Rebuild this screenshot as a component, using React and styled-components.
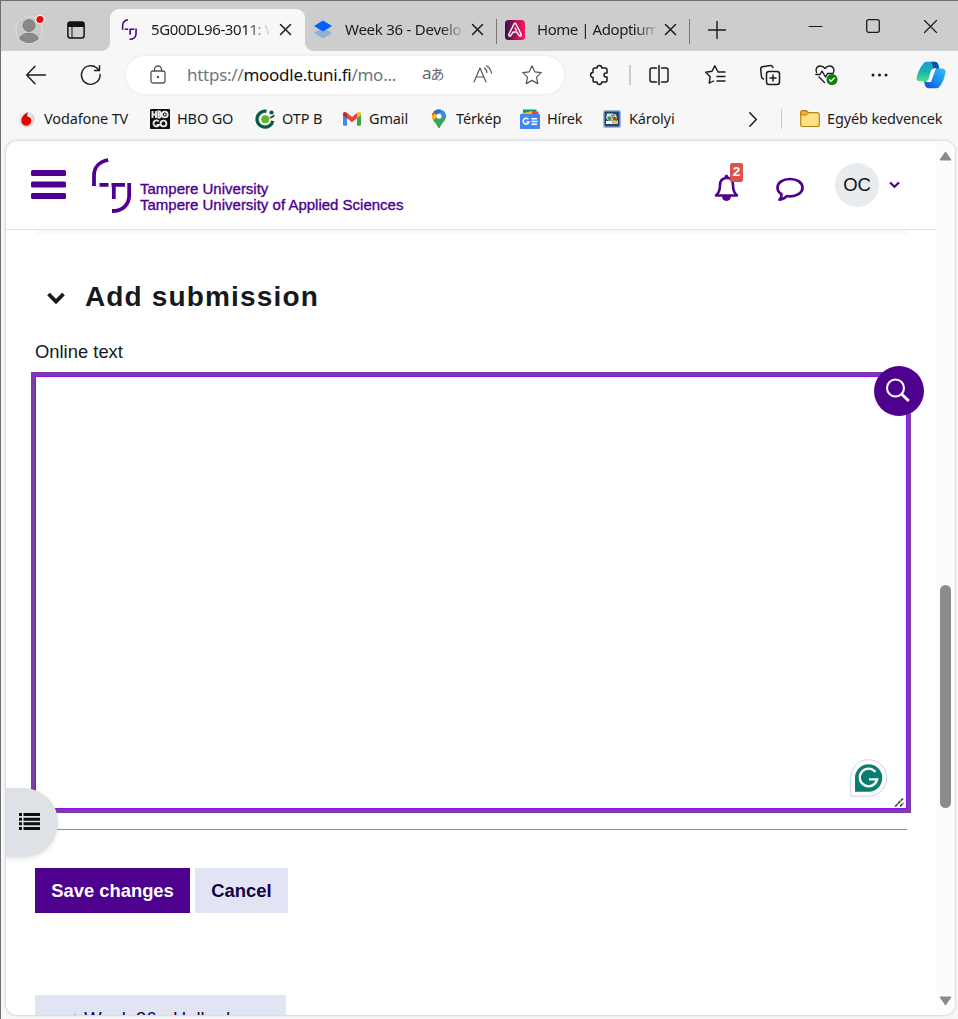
import React from 'react';
import styled, { createGlobalStyle, css } from 'styled-components';

const UI = '"Noto Sans", "Open Sans", "Noto Sans CJK JP", sans-serif';
const PAGE = '"Liberation Sans", Arial, sans-serif';
const PURPLE = '#4e008e';

const Global = createGlobalStyle`
  * { box-sizing: border-box; }
  body { margin: 0; background: #f7f7f7; overflow: hidden; }
  svg { display: block; flex: none; overflow: visible; }
`;

const Window = styled.div`
  width: 958px;
  height: 1019px;
  overflow: hidden;
  display: flex;
  flex-direction: column;
  background: #f7f7f7;
  border-left: 1px solid #706e6e;
  border-top: 1px solid #706e6e;
  font-family: ${UI};
  color: #1b1b1b;
`;

const TabStrip = styled.div`
  height: 50px;
  flex: none;
  display: flex;
  background: #cdcdcd;
`;

const Slot = styled.div`
  width: ${(p) => p.$w}px;
  height: ${(p) => (p.$h ? p.$h + 'px' : '100%')};
  flex: none;
  display: flex;
  align-items: center;
  justify-content: center;
`;

const Tab = styled.div`
  position: relative;
  width: ${(p) => p.$w}px;
  height: 42px;
  margin-top: 8px;
  flex: none;
  display: flex;
  align-items: center;
  padding: 0 0 1px 8px;
  font-size: 15px;
  ${(p) =>
    p.$active &&
    css`
      padding-left: 9px;
      background: #f7f7f7;
      border-radius: 9px 9px 0 0;
      &::before,
      &::after {
        content: '';
        position: absolute;
        bottom: 0;
        width: 8px;
        height: 8px;
      }
      &::before {
        left: -8px;
        background: radial-gradient(circle at 0 0, transparent 7.5px, #f7f7f7 8px);
      }
      &::after {
        right: -8px;
        background: radial-gradient(circle at 100% 0, transparent 7.5px, #f7f7f7 8px);
      }
    `}
`;

const TabTitle = styled.span`
  width: 119px;
  margin-left: ${(p) => p.$ml || 13}px;
  padding-bottom: 2px;
  white-space: nowrap;
  letter-spacing: ${(p) => p.$ls || 0}px;
  mask-image: linear-gradient(to right, #000 ${(p) => p.$fade}px, transparent ${(p) => p.$fade + 24}px);
`;

const TabClose = styled.div`
  width: 14px;
  margin-left: ${(p) => p.$ml || 6}px;
  display: flex;
  justify-content: center;
`;

const Divider = styled.div`
  width: ${(p) => p.$w || 1}px;
  height: ${(p) => p.$h}px;
  margin-top: ${(p) => p.$mt || 0}px;
  flex: none;
  align-self: center;
  background: ${(p) => p.$c};
`;

const Toolbar = styled.div`
  height: 47px;
  flex: none;
  display: flex;
  align-items: center;
`;

const Address = styled.div`
  width: 438px;
  height: 38px;
  flex: none;
  display: flex;
  align-items: center;
  background: #fff;
  border-radius: 19px;
  box-shadow: 0 0 4px rgba(0, 0, 0, 0.07);
`;

const Url = styled.span`
  width: 226px;
  margin-left: 13px;
  font-size: 17px;
  letter-spacing: -0.27px;
  color: #70757a;
  white-space: nowrap;
  b { font-weight: 400; color: #111; }
`;

const Translate = styled.span`
  width: 32px;
  padding-bottom: 3px;
  font-size: 17px;
  line-height: 20px;
  letter-spacing: -1px;
  color: #666;
  white-space: nowrap;
  small { font-size: 14px; }
`;

const Bookmarks = styled.div`
  height: 43px;
  flex: none;
  display: flex;
  align-items: center;
  padding: 0 0 1px 16px;
`;

const Bookmark = styled.div`
  width: ${(p) => p.$w}px;
  flex: none;
  display: flex;
  align-items: center;
  gap: 7px;
  font-size: 14.5px;
  line-height: 20px;
  letter-spacing: -0.14px;
  white-space: nowrap;
`;

const BookmarkName = styled.span`
  padding-bottom: 2px;
`;

const Viewport = styled.div`
  width: 949px;
  height: 874px;
  margin-left: 5px;
  flex: none;
  display: flex;
  overflow: hidden;
  background: #fff;
  border-radius: 11px;
  box-shadow: 0 0 3px rgba(0, 0, 0, 0.28);
  font-family: ${PAGE};
`;

const Main = styled.main`
  position: relative;
  width: 930px;
  height: 874px;
  flex: none;
  overflow: hidden;
`;

const Scrollbar = styled.div`
  width: 19px;
  padding: 10px 0 9px;
  display: flex;
  flex-direction: column;
  align-items: center;
  justify-content: space-between;
  background: #fcfcfc;
`;

const Thumb = styled.div`
  width: 11px;
  height: 223px;
  margin: 424px 0 auto;
  border-radius: 6px;
  background: #8b8b8b;
`;

const SiteHeader = styled.header`
  height: 89px;
  display: flex;
  border-bottom: 1px solid #dee2e6;
`;

const Brand = styled.div`
  width: 615px;
  display: flex;
  padding: 17px 0 0 25px;
`;

const Menu = styled.div`
  width: 35px;
  margin-top: 12px;
`;

const BrandName = styled.div`
  margin: 23px 0 0 8px;
  font-size: 15px;
  line-height: 16px;
  letter-spacing: 0;
  color: ${PURPLE};
  -webkit-text-stroke: 0.35px ${PURPLE};
  white-space: nowrap;
`;

const Bell = styled.div`
  position: relative;
  width: 27px;
  height: 30px;
  margin: 31px 0 0 92px;
`;

const Badge = styled.span`
  position: absolute;
  left: 17px;
  top: -9px;
  width: 13px;
  height: 19px;
  border-radius: 2px;
  background: #d9534f;
  color: #fff;
  font: 700 13.5px/18px ${PAGE};
  text-align: center;
`;

const Avatar = styled.div`
  width: 44px;
  height: 44px;
  margin: 22px 10px 0 31px;
  border-radius: 50%;
  background: #e9ecef;
  display: flex;
  align-items: center;
  justify-content: center;
  font-size: 18.5px;
  color: #111;
`;

const Form = styled.section`
  padding: 0 29px;
`;

const Strip = styled.div`
  height: 4px;
  margin-right: -1px;
  background: #f8f9fb;
`;

const Heading = styled.h3`
  height: 40px;
  margin: 43px 0 0 12px;
  display: flex;
  align-items: center;
  gap: 20px;
  font-size: 28px;
  letter-spacing: 1.15px;
  color: #16191c;
  svg { margin-top: 2px; }
`;

const Label = styled.label`
  display: block;
  height: 24px;
  margin-top: 23px;
  font-size: 18.4px;
  line-height: 24px;
  color: #16191c;
`;

const Editor = styled.div`
  width: 880px;
  height: 441px;
  margin: 8px 0 0 -4px;
  border: 4px solid #7b3dac;
  box-shadow: inset 0 0 0 1px #960cf0;
  background: #fff;
  display: flex;
  align-items: flex-end;
  justify-content: flex-end;
`;

const Resizer = styled.div`
  margin: 0 3px 2px 8px;
`;

const GrammarBadge = styled.div`
  margin-bottom: 12px;
`;

const Rule = styled.div`
  height: 1px;
  margin-top: 16px;
  background: #8e8e93;
`;

const Actions = styled.div`
  display: flex;
  gap: 5px;
  margin-top: 38px;
`;

const Button = styled.button`
  width: ${(p) => p.$w}px;
  height: 45px;
  padding: 0;
  border: 0;
  background: ${(p) => (p.$primary ? PURPLE : '#e1e4f3')};
  color: ${(p) => (p.$primary ? '#fff' : '#150046')};
  font: 700 18.4px/44px ${PAGE};
`;

const PrevLink = styled.a`
  display: block;
  width: 251px;
  height: 45px;
  margin-top: 82px;
  padding: 12px 0 0 26px;
  background: #e1e4f3;
  color: #150046;
  font-size: 18.4px;
  line-height: 24px;
  white-space: nowrap;
`;

const SearchBubble = styled.div`
  position: absolute;
  left: 868px;
  top: 225px;
  width: 50px;
  height: 50px;
  padding: 0 2px 1px 0;
  border-radius: 50%;
  background: ${PURPLE};
  display: flex;
  align-items: center;
  justify-content: center;
`;

const Drawer = styled.div`
  position: absolute;
  left: 0;
  top: 647px;
  width: 52px;
  height: 69px;
  padding: 0 0 3px 13px;
  border-radius: 0 35px 35px 0;
  background: #dee2e6;
  box-shadow: 0 2px 4px rgba(0, 0, 0, 0.1);
  display: flex;
  align-items: center;
`;

const Stroke = ({ w = 20, h = 20, sw = 1.4, c = '#1b1b1b', children }) => (
  <svg width={w} height={h} viewBox={`0 0 ${w} ${h}`} fill="none" stroke={c} strokeWidth={sw} strokeLinecap="round" strokeLinejoin="round">
    {children}
  </svg>
);

const Cross = ({ s = 11, sw = 1.5 }) => (
  <Stroke w={s} h={s} sw={sw}><path d={`M.5 .5 ${s - 0.5} ${s - 0.5}M${s - 0.5} .5 .5 ${s - 0.5}`} /></Stroke>
);

const TuniMark = ({ w, h, sw = 3.8 }) => (
  <svg width={w} height={h} viewBox="0 0 40 55" fill="none" stroke={PURPLE} strokeWidth={sw}>
    <path d="M2 28V18C2 9.5 7.5 3.5 16.2 2" />
    <path d="M7.5 26.8h9M19.5 26.8h13.5M21.8 27v14" />
    <path d="M37.2 25v12C37.2 46.5 31 53 20 53" />
  </svg>
);

const Profile = () => (
  <svg width="30" height="32" viewBox="0 0 30 32">
    <defs><clipPath id="face"><circle cx="14" cy="17" r="13" /></clipPath></defs>
    <circle cx="14" cy="17" r="13.3" fill="#c9c7c5" stroke="#e0dfde" />
    <g clipPath="url(#face)" fill="#8b8987" stroke="#777573">
      <circle cx="14" cy="12.500" r="5.800" />
      <path d="M4 30c0-6 3-9.500 10-9.500S24 24 24 30Z" />
    </g>
    <circle cx="25" cy="6.500" r="4.200" fill="#e80b0b" stroke="#eee" strokeWidth="1.200" />
  </svg>
);

const Copilot = () => (
  <svg width="30" height="28" viewBox="0 0 30 28">
    <defs>
      <linearGradient id="cp1" x1="0" y1="0" x2="0" y2="1"><stop offset="0" stopColor="#1a9fd8" /><stop offset=".5" stopColor="#16b4b0" /><stop offset="1" stopColor="#55db83" /></linearGradient>
      <linearGradient id="cp2" x1="1" y1="0" x2="0" y2="1"><stop offset="0" stopColor="#35bdf5" /><stop offset=".55" stopColor="#1c87ee" /><stop offset="1" stopColor="#1546c9" /></linearGradient>
    </defs>
    <path d="M7 3Q8 .8 11 .8h7.500q3 0 3.800 3l1 4H18q-2.500 0-3.300 3l-2 7q-.8 2.500-3.500 2.500H4q-4 0-3.300-4Q2.500 8.500 7 3Z" fill="url(#cp1)" />
    <path d="M15 .8h3.500q3 0 3.800 3l1 4H18Z" fill="#174ea3" />
    <path d="M23 7.500h3q4 .2 3.500 4.500-1.300 7-5 12.500-1.300 2.700-4.500 2.700h-7q-3 0-4-3l-1-4h2q3-.2 3.800-3L16 10.500q.8-3 3.500-3Z" fill="url(#cp2)" />
    <path d="M19 8q-2.300.3-3.300 2.500l-2 7q-.6 2-1.700 2.700h2.500l3.200-9Z" fill="#fff" stroke="#fff" strokeWidth="1.400" />
  </svg>
);

const Vodafone = () => (
  <svg width="20" height="20" viewBox="0 0 20 20">
    <circle cx="9.800" cy="10.500" r="7.800" fill="#d0d0d0" />
    <circle cx="8.800" cy="9.800" r="7" fill="#e8e8e8" />
    <path d="M11.300 3c-3.500 1.500-7 4.800-7 8.800a5 5 0 0 0 10 0c0-2.900-1.700-3.900-4-4.400-.4-1.800.2-3.200 1-4.400Z" fill="#e60000" />
  </svg>
);

const HboGo = () => (
  <svg width="20" height="20" viewBox="0 0 20 20">
    <rect width="20" height="20" rx="1" fill="#111" />
    <g fill="none" stroke="#e8e8e8" strokeWidth="1.900">
      <path d="M2.500 2v7M6 2v7M2.500 5.500H6M8.300 2.500v6h1.500q2.200-1.500 0-3 2-1.300 0-3Z" /><circle cx="14.800" cy="5.500" r="2.900" /><path d="M8.800 12.500a3 3 0 1 0 .2 3.500H6.500" /><circle cx="13.500" cy="14.500" r="2.900" />
    </g>
    <circle cx="14.800" cy="5.500" r="1" fill="#fff" />
  </svg>
);

const Otp = () => (
  <svg width="20" height="20" viewBox="0 0 20 20">
    <path d="M11.500 2.300a8 8 0 1 0 6.300 9.500" fill="none" stroke="#075c3d" strokeWidth="3.300" />
    <circle cx="10.300" cy="10.200" r="4" fill="#65b32e" /><circle cx="16.500" cy="3.500" r="2.100" fill="#075c3d" /><path d="M14.800 8.700q3.500 0 4.200-2.800" fill="none" stroke="#075c3d" strokeWidth="1.800" />
  </svg>
);

const Gmail = () => (
  <svg width="20" height="20" viewBox="0 0 20 20">
    <path d="M1 5v10.500q0 1.300 1.300 1.300H5V8Z" fill="#4285f4" />
    <path d="M19 5v10.500q0 1.300-1.300 1.300H15V8Z" fill="#34a853" />
    <path d="m5 4 5 4 5-4v5.300l-5 3.900-5-3.900Z" fill="#ea4335" />
    <path d="M1 6.300V5q.3-3 3.200-1.600L5 4v5.300Z" fill="#c5221f" /><path d="M19 6.300V5q-.3-3-3.200-1.600L15 4v5.300Z" fill="#fbbc04" />
  </svg>
);

const MapPin = () => (
  <svg width="20" height="20" viewBox="0 0 20 20">
    <defs><clipPath id="pin"><path d="M10 .5C5.800.5 3 3.700 3 7.400c0 4.200 4.200 6 5.800 10.700.5 1.500 1.900 1.500 2.400 0C12.800 13.400 17 11.600 17 7.400 17 3.700 14.200.5 10 .5Z" /></clipPath></defs>
    <g clipPath="url(#pin)"><path d="M0 0h20v20H0z" fill="#34a853" /><path d="M0 15 17 0H0Z" fill="#fbbc04" /><path d="M0 10 10 0H0Z" fill="#ea4335" /><path d="m8 7 7-8 5 5-9 7Z" fill="#4285f4" /><path d="M4 0h8v3L7 6Z" fill="#1a73e8" /></g>
    <circle cx="10" cy="7.300" r="2.500" fill="#fff" />
  </svg>
);

const News = () => (
  <svg width="20" height="20" viewBox="0 0 20 20">
    <path d="M3 .5h13.500V6H3Z" fill="#0c9d58" /><path d="M1 4.500 12 2l2 4H1Z" fill="#fbbc04" /><path d="M12 2.500h6.500V7H12Z" fill="#ea4335" />
    <rect y="5" width="20" height="15" rx="1" fill="#4285f4" />
    <path d="M8.500 10.300A3 3 0 1 0 9 13H6.500M11.500 9.800H17M11.500 12.500h6M11.500 15.200H17" fill="none" stroke="#fff" strokeWidth="1.500" />
  </svg>
);

const Crest = () => (
  <svg width="20" height="20" viewBox="0 0 20 20">
    <rect x="1" y="1" width="18" height="18" rx="2" fill="#9eb7db" /><rect x="2.500" y="2.500" width="15" height="15" rx="1" fill="#244574" />
    <path d="M5 4.500h5l4 1 1 4-2 2H6L4 9Z" fill="#dfead8" /><path d="M5 8.500 8 7l2 3-3 2Z" fill="#279b60" /><path d="M10 8h4l1 3h-4Z" fill="#e32b2d" /><path d="M9 5.500h4v2H9Z" fill="#4ba45d" /><path d="M4 12h6l1 3H4Z" fill="#f8fafc" /><path d="M10 11.500h6V15h-5Z" fill="#efc731" />
  </svg>
);

const Folder = () => (
  <svg width="20" height="20" viewBox="0 0 20 20">
    <path d="M.7 3.500q0-1.800 1.800-1.800h4l2 2H17q2.300 0 2.300 2.300v9.500q0 2-2 2H2.500q-1.800 0-1.800-2Z" fill="#ffe083" stroke="#b98511" strokeWidth="1.200" /><path d="M1 6h5.500l2-2-2-2H2.500Q1 2 1 4Z" fill="#edb72f" stroke="#b98511" />
  </svg>
);

const GrammarIcon = () => (
  <svg width="37" height="38" viewBox="0 0 37 38">
    <path d="M18.500.7a17.900 17.900 0 1 1 0 36.500H.7V18.700A18 18 0 0 1 18.500.7Z" fill="#fff" stroke="#cfd1dc" />
    <path d="M18.500 5.300a13.500 13.500 0 1 1 0 27.500H5V19A13.600 13.600 0 0 1 18.500 5.300Z" fill="#087e6d" />
    <path d="M25.500 13a8.800 8.800 0 1 0 1.700 7.300H19M27.400 20.300l-2.700 5" fill="none" stroke="#fff" strokeWidth="2.300" />
  </svg>
);

const bookmarks = [
  ['Vodafone TV', 133, Vodafone],
  ['HBO GO', 105, HboGo],
  ['OTP B', 87, Otp],
  ['Gmail', 87, Gmail],
  ['Térkép', 91, MapPin],
  ['Hírek', 82, News],
  ['Károlyi', 138, Crest],
];

export default function App() {
  return (
    <Window>
      <Global />
      <TabStrip>
        <Slot $w={14} />
        <Slot $w={30} $h={56}><Profile /></Slot>
        <Slot $w={61} $h={58}>
          <svg width="18" height="18" viewBox="0 0 18 18"><rect x=".9" y=".9" width="16.200" height="16.200" rx="2.500" fill="none" stroke="#111" strokeWidth="1.500" /><path d="M1 2.500Q1 1 2.500 1h13Q17 1 17 2.500V6H1Z" fill="#111" /><path d="M5 6v11" stroke="#111" /></svg>
        </Slot>
        <Slot $w={4} />
        <Tab $active $w={195}>
          <Slot $w={20}><TuniMark w={17} h={21} sw={4.2} /></Slot>
          <TabTitle $ml={12} $ls={-0.4} $fade={96}>5G00DL96-3011: W</TabTitle>
          <TabClose $ml={8}><Cross /></TabClose>
        </Tab>
        <Tab $w={191}>
          <Slot $w={19}>
            <svg width="18" height="19" viewBox="0 0 18 19"><path d="M0 13 9 7.500 18 13l-9 5.500Z" fill="#8db0d3" /><path d="M0 6 9 .5 18 6l-9 5.500Z" fill="#0061fe" /></svg>
          </Slot>
          <TabTitle $ls={-0.25} $fade={96}>Week 36 - Develo</TabTitle>
          <TabClose><Cross /></TabClose>
        </Tab>
        <Divider $h={25} $mt={10} $c="#777" />
        <Tab $w={192}>
          <Slot $w={20}>
            <svg width="20" height="20" viewBox="0 0 20 20"><defs><linearGradient id="ad"><stop stopColor="#33114a" /><stop offset=".55" stopColor="#b61358" /><stop offset="1" stopColor="#ff1464" /></linearGradient></defs><rect width="20" height="20" rx="3.500" fill="url(#ad)" /><path d="M9 4 3.800 14.500Q3.500 16.500 5.500 16L8.300 12h3.400l2.800 4q2 .5 1.700-1.500L11 4Q10 2.500 9 4Zm1 3.500 1.500 3.300" fill="none" stroke="#fff" strokeWidth="1.400" /></svg>
          </Slot>
          <TabTitle $ml={12} $ls={-0.45} $fade={98}>Home | Adoptium</TabTitle>
          <TabClose $ml={7}><Cross /></TabClose>
        </Tab>
        <Divider $h={25} $mt={10} $c="#777" />
        <Slot $w={54} $h={57}><Stroke w={18} h={18}><path d="M9 .5v17M.5 9h17" /></Stroke></Slot>
        <Slot $w={61} />
        <Slot $w={20}><Stroke w={13} h={1} sw={1.2}><path d="M0 .5h13" /></Stroke></Slot>
        <Slot $w={96}><Stroke w={14} h={14} sw={1.3}><rect x=".7" y=".7" width="12.600" height="12.600" rx="2" /></Stroke></Slot>
        <Slot $w={18}><Cross s={13} sw={1.2} /></Slot>
      </TabStrip>

      <Toolbar>
        <Slot $w={25} />
        <Slot $w={20}><Stroke><path d="M19.500 10H.7M9 1.200.7 10 9 18.800" /></Stroke></Slot>
        <Slot $w={35} />
        <Slot $w={20}><Stroke><path d="M19 9.500A9.300 9.300 0 1 1 15.800 3L18 5M18.500 .8v4.700h-5" /></Stroke></Slot>
        <Slot $w={25} />
        <Address>
          <Slot $w={24} />
          <Slot $w={16}><Stroke w={16} h={19} sw={1.3} c="#555"><rect x="1" y="6" width="14" height="12" rx="2" /><path d="M4.500 6V4.500a3.500 3.500 0 0 1 7 0V6" /><circle cx="8" cy="12" r=".6" fill="#333" /></Stroke></Slot>
          <Slot $w={8} />
          <Url>https://<b>moodle.tuni.fi</b>/mo...</Url>
          <Slot $w={9} />
          <Translate>a<small>あ</small></Translate>
          <Slot $w={19} />
          <Slot $w={20}><Stroke c="#555" sw={1.2}><path d="m1 17 6-14 6 14M3 12h8M11.500 3q2 1.500 2.500 4.500M13.500.8Q17.500 3 18.500 8" /></Stroke></Slot>
          <Slot $w={29} />
          <Slot $w={20}><Stroke c="#555" sw={1.2}><path d="m10 .8 2.800 6 6.500.8-4.800 4.500 1.300 6.500L10 15.400l-5.800 3.200 1.300-6.500L.7 7.600l6.500-.8Z" /></Stroke></Slot>
        </Address>
        <Slot $w={26} />
        <Slot $w={20}><Stroke sw={1.5}><path d="M7 3a2.400 2.400 0 0 1 4.800 0h3.400q1.800 0 1.800 1.800v3.300h-1a2 2 0 0 0 0 4h1v3.100q0 1.800-1.800 1.800h-3.400a2.400 2.400 0 0 1-4.800 0H4.800Q3 17 3 15.200v-2.800a2.400 2.400 0 0 1 0-4.800V4.800Q3 3 4.800 3Z" /></Stroke></Slot>
        <Slot $w={19} />
        <Divider $w={2} $h={20} $c="#ccc" />
        <Slot $w={18} />
        <Slot $w={20}><Stroke sw={1.5}><path d="M7.500 3H3Q1 3 1 5v10q0 2 2 2h4.500M12.500 3H17q2 0 2 2v10q0 2-2 2h-4.500M10 .5v19" /></Stroke></Slot>
        <Slot $w={36} />
        <Slot $w={20}><Stroke sw={1.4}><path d="M12.500 6 9.800.8 7 6.200.7 7.200l4.500 4.500-1 6.500L8.500 16M13 7h7M12 11.500h8M12 16h8" /></Stroke></Slot>
        <Slot $w={35} />
        <Slot $w={20}><Stroke sw={1.5}><rect x="6.500" y="6.500" width="13" height="13" rx="2.500" /><path d="M13 10v6M10 13h6M3.500 14Q1.800 13.500 1.500 12L.7 4q-.2-2 1.800-2.300L10.500.6q2-.2 2.500 2" /></Stroke></Slot>
        <Slot $w={35} />
        <Slot $w={24}>
          <Stroke w={24} h={20} sw={1.4}><path d="M1.500 7.500C0 4.500 2 1 5.200 1c2 0 3.500.8 4.800 2.500C11.300 1.800 12.800 1 14.800 1 18 1 20 4.500 18.500 7.500M.8 9.500H5l2-3.500 3.500 6 2-3.500H18M4 12l5.500 5.500" /><circle cx="17" cy="14.500" r="5.500" fill="#107c10" stroke="none" /><path d="m14.600 14.800 1.500 1.500 3.200-3.400" stroke="#fff" /></Stroke>
        </Slot>
        <Slot $w={31} />
        <Slot $w={18}><svg width="17" height="4" viewBox="0 0 17 4" fill="#1b1b1b"><circle cx="2" cy="2" r="1.500" /><circle cx="8.500" cy="2" r="1.500" /><circle cx="15" cy="2" r="1.500" /></svg></Slot>
        <Slot $w={28} />
        <Slot $w={30}><Copilot /></Slot>
      </Toolbar>

      <Bookmarks>
        {bookmarks.map(([name, w, Icon]) => (
          <Bookmark key={name} $w={w}><Icon /><BookmarkName>{name}</BookmarkName></Bookmark>
        ))}
        <Slot $w={26}><Stroke w={8} h={15} sw={1.5}><path d="m.8.8 6.500 6.700L.8 14.200" /></Stroke></Slot>
        <Slot $w={15} />
        <Divider $h={20} $c="#ccc" />
        <Slot $w={18} />
        <Bookmark $w={145}><Folder /><BookmarkName>Egyéb kedvencek</BookmarkName></Bookmark>
      </Bookmarks>

      <Viewport>
        <Main>
          <SiteHeader>
            <Brand>
              <Menu>
                <svg width="35" height="29" viewBox="0 0 35 29" fill={PURPLE}><rect width="35" height="6" rx="1.500" /><rect y="11.500" width="35" height="6" rx="1.500" /><rect y="23" width="35" height="6" rx="1.500" /></svg>
              </Menu>
              <Slot $w={26} $h={10} />
              <TuniMark w={40} h={55} />
              <BrandName>Tampere University<br />Tampere University of Applied Sciences</BrandName>
            </Brand>
            <Bell>
              <svg width="27" height="30" viewBox="0 0 27 30"><path d="M3 23.500Q7 20 7 13q0-6.500 6.500-7T20 13q0 7 4 10.500Z" fill="none" stroke={PURPLE} strokeWidth="2.600" strokeLinejoin="round" /><path d="M12 5V4.500a1.500 1.500 0 0 1 3 0V5ZM9.500 24.500h8a4 4 0 0 1-8 0Z" fill={PURPLE} stroke={PURPLE} /></svg>
              <Badge>2</Badge>
            </Bell>
            <Slot $w={36} />
            <Slot $w={28} $h={96}>
              <svg width="28" height="25" viewBox="0 0 28 25"><path d="M14 2c7 0 12.500 3.700 12.500 8.700S21 19.300 14 19.300q-1.800 0-3.200-.3-2.800 3.300-7.300 3.700 2.300-2.300 2-5.500-4-2.500-4-6.500C1.500 5.700 7 2 14 2Z" fill="none" stroke={PURPLE} strokeWidth="2.700" strokeLinejoin="round" /></svg>
            </Slot>
            <Avatar>OC</Avatar>
            <Slot $w={11}><svg width="11" height="8" viewBox="0 0 11 8"><path d="m1 1.500 4.500 4.300L10 1.500" fill="none" stroke={PURPLE} strokeWidth="2.200" /></svg></Slot>
          </SiteHeader>
          <Form>
            <Strip />
            <Heading>
              <svg width="18" height="12" viewBox="0 0 18 12"><path d="m1.500 2 7.500 7.500L16.500 2" fill="none" stroke="#16191c" strokeWidth="3.800" /></svg>
              Add submission
            </Heading>
            <Label>Online text</Label>
            <Editor>
              <GrammarBadge><GrammarIcon /></GrammarBadge>
              <Resizer><svg width="9" height="9" viewBox="0 0 9 9"><path d="M0 8.500 8 .5M5 8.500 8.500 5" fill="none" stroke="#444" strokeWidth="1.700" strokeDasharray="3.500 .6" /></svg></Resizer>
            </Editor>
            <Rule />
            <Actions>
              <Button $w={155} $primary>Save changes</Button>
              <Button $w={93}>Cancel</Button>
            </Actions>
            <PrevLink>◄ Week 36 - Hello dev</PrevLink>
          </Form>
          <SearchBubble>
            <svg width="26" height="26" viewBox="0 0 26 26" fill="none" stroke="#fff"><circle cx="10.500" cy="10" r="8.500" strokeWidth="2.100" /><path d="m17 16.500 6.800 6.500" strokeWidth="3" /></svg>
          </SearchBubble>
          <Drawer>
            <svg width="21" height="17" viewBox="0 0 21 17" fill="#0c0f12"><path d="M0 0h3v3H0zM4.500 0H21v3H4.500zM0 4.700h3v3H0zM4.500 4.700H21v3H4.500zM0 9.300h3v3H0zM4.500 9.300H21v3H4.500zM0 14h3v3H0zM4.500 14H21v3H4.500z" /></svg>
          </Drawer>
        </Main>
        <Scrollbar>
          <svg width="13" height="10" viewBox="0 0 13 10"><path d="M6.500 1 12 9H1Z" fill="#8b8b8b" stroke="#8b8b8b" strokeLinejoin="round" /></svg>
          <Thumb />
          <svg width="13" height="10" viewBox="0 0 13 10"><path d="M6.500 9 12 1H1Z" fill="#8b8b8b" stroke="#8b8b8b" strokeLinejoin="round" /></svg>
        </Scrollbar>
      </Viewport>
    </Window>
  );
}
